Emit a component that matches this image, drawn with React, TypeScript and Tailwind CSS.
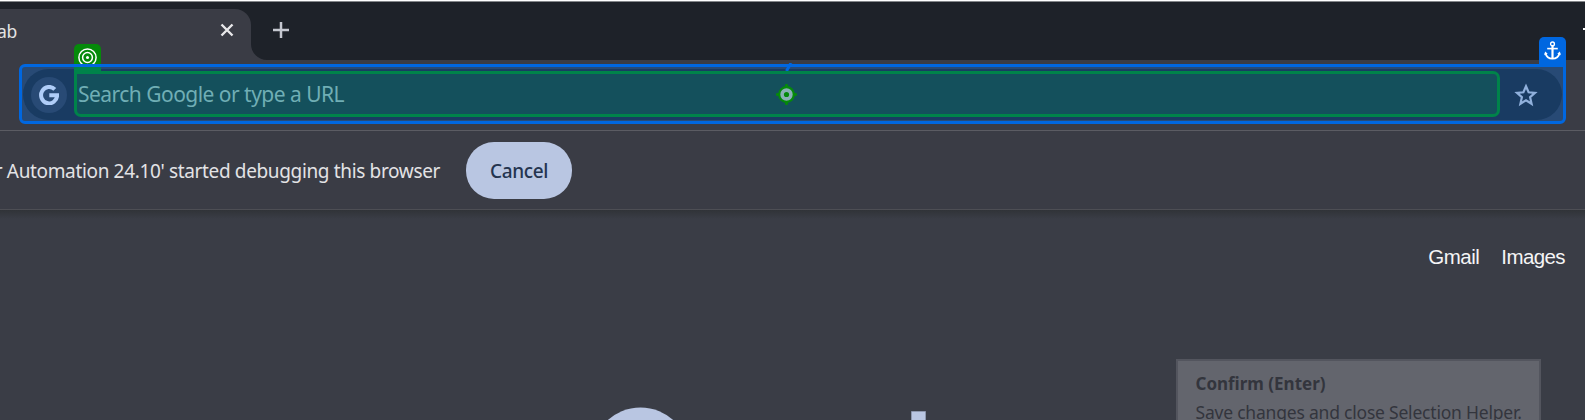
import React from "react";

function TabStrip() {
  return (
    <div className="flex h-[60px] items-end border-t border-white bg-[#1e2229] shadow-[inset_0_1px_0_#84878a]">
      <div className="flex h-[51px] w-[251px] items-center rounded-tr-[16px] bg-[#3a3c45]">
        <span className="ml-[-3px] mt-[-7px] w-[222px] text-[17.5px] tracking-[-0.4px] text-[#e3e3e3]">ab</span>
        <svg className="mt-[-9px] h-4 w-4" viewBox="0 0 16 16" fill="none" stroke="#e8e8ea" strokeWidth="2.4">
          <path d="M2.5 2.5 13.5 13.5M13.5 2.5 2.5 13.5" />
        </svg>
      </div>
      <svg className="h-4 w-4" viewBox="0 0 16 16" fill="#3a3c45">
        <path d="M0 0A16 16 0 0 0 16 16H0Z" />
      </svg>
      <svg className="mb-[22px] ml-[6px] h-4 w-4" viewBox="0 0 16 16" fill="none" stroke="#c5c8d0" strokeWidth="2.5">
        <path d="M8 0V16M0 8H16" />
      </svg>
      <div className="mb-[30px] ml-auto h-[2px] w-[2px] bg-white" />
    </div>
  );
}

function TargetBadge() {
  return (
    <div className="absolute top-[-23px] left-[52px] flex h-[20px] w-[27px] justify-center overflow-hidden rounded-t-[5px] bg-[#058a0a]">
      <svg className="mt-[4px] h-[19px] w-[19px] shrink-0" viewBox="0 0 19 19" fill="none" stroke="#fff" strokeWidth="1.5">
        <circle cx="9.5" cy="9.5" r="8.6" />
        <circle cx="9.5" cy="9.5" r="4.9" />
        <circle cx="9.5" cy="9.5" r="1.5" fill="#fff" stroke="none" />
      </svg>
    </div>
  );
}

function AnchorBadge() {
  return (
    <div className="absolute top-[-30px] right-[-3px] flex h-[30px] w-[27px] justify-center rounded-t-[5px] bg-[#0067e0]">
      <svg className="mt-[4px] h-[19px] w-[17px]" viewBox="0 0 17 19" fill="none" stroke="#fff">
        <circle cx="8.5" cy="2.9" r="1.9" strokeWidth="1.4" />
        <path d="M8.5 5V17.5" strokeWidth="2.2" />
        <path d="M3.2 7.6H13.8" strokeWidth="1.6" />
        <path d="M1.4 12C2.2 15.4 5 17.6 8.5 17.7C12 17.6 14.8 15.4 15.6 12" strokeWidth="1.8" />
        <path d="M.2 14.2 1.1 10.5 3.7 12.7ZM16.8 14.2 15.9 10.5 13.3 12.7Z" fill="#fff" stroke="none" />
      </svg>
    </div>
  );
}

function AddressBar() {
  return (
    <div className="h-[70px] bg-[#3a3c45] pt-[4px] pr-[19px] pl-[19px]">
      <div className="relative h-[60px] rounded-[6px] rounded-tr-none border-[3px] border-[#0067e0] bg-[#284a75] pt-[2px] pr-px pl-px">
        <div className="flex h-[51px] items-center rounded-full bg-[#193b62]">
          <div className="ml-2 flex h-9 w-9 items-center justify-center rounded-full bg-[#284a75]">
            <svg className="h-5 w-5" viewBox="0 0 20 20" fill="none" stroke="#b0cdf8" strokeWidth="4">
              <path d="M15.8 4.4A8 8.2 0 1 0 18.1 10.3H10.3" />
            </svg>
          </div>
          <div className="mt-[-1px] ml-[7px] flex h-[46px] w-[1426px] items-center rounded-[7px] rounded-tl-none border-[3px] border-[#00834a] bg-[#14505c] pt-[2px] pl-px">
            <span className="whitespace-nowrap text-[21px] tracking-[-0.53px] text-[#70aeb5]">Search Google or type a URL</span>
          </div>
          <svg className="ml-[14px] h-6 w-6" viewBox="0 0 24 24" fill="none" stroke="#90b0dc" strokeWidth="2.2">
            <path d="M12 3.2 14.6 9.3 21 9.9 16.1 14.2 17.6 20.8 12 17.3 6.4 20.8 7.9 14.2 3 9.9 9.4 9.3Z" />
          </svg>
        </div>
        <div className="absolute top-0 left-[52px] h-[5px] w-[27px] bg-[#00834a]" />
        <TargetBadge />
        <AnchorBadge />
        <svg className="absolute top-[-4px] left-[763px] h-[8px] w-[8px]" viewBox="0 0 8 8" stroke="#0067e0" strokeWidth="3">
          <path d="M1.5 8 6 0" />
        </svg>
        <svg className="absolute top-[17px] left-[754px] h-[21px] w-[21px]" viewBox="0 0 21 21">
          <path d="M9.4 0H11.6L12.6 4H8.4ZM9.4 21H11.6L12.6 17H8.4ZM0 9.4V11.6L4 12.6V8.4ZM21 9.4V11.6L17 12.6V8.4Z" fill="#058a0a" />
          <circle cx="10.5" cy="10.5" r="8.4" fill="#058a0a" />
          <circle cx="10.5" cy="10.5" r="4.4" fill="none" stroke="#8ab0b5" strokeWidth="3.6" />
        </svg>
      </div>
    </div>
  );
}

function InfoBar() {
  return (
    <div className="flex h-[80px] items-center border-y border-t-[#5b5c63] border-b-[#4d4e54] bg-[#3a3c45]">
      <div className="flex w-[440px] shrink-0 justify-end pt-[2px]">
        <span className="whitespace-nowrap text-[19px] tracking-[-0.35px] text-[#e3e3e5]">r Automation 24.10' started debugging this browser</span>
      </div>
      <button className="ml-[26px] h-[57px] w-[106px] rounded-[28px] bg-[#b9c6e2] pt-[2px] text-[19px] font-medium tracking-[-0.4px] text-[#24344f]">Cancel</button>
    </div>
  );
}

function NewTabPage() {
  return (
    <div className="flex h-[210px] flex-col overflow-hidden bg-[linear-gradient(to_bottom,#303338_0px,#3a3d46_9px)]">
      <div className="flex justify-end gap-[22px] pt-[35px] pr-5 font-['Liberation_Sans',sans-serif] text-[20.5px] leading-[24px] text-[#f5f5f6]">
        <span className="tracking-[-0.5px]">Gmail</span>
        <span className="tracking-[-0.6px]">Images</span>
      </div>
      <div className="flex items-start pt-[90px]">
        <svg className="ml-[590px] mt-[47px] h-[15px] w-[340px] shrink-0" viewBox="0 0 340 15" fill="#b9c6e2">
          <circle cx="50.5" cy="50.5" r="49" />
          <path d="M321.5 5.5H335.5V15H321.5Z" stroke="#8d97ae" />
        </svg>
        <div className="ml-[246px] h-[90px] w-[365px] shrink-0 border-2 border-[#53555e] bg-[#63656d] pt-[9px] pl-[17.5px] text-[#33353d]">
          <p className="whitespace-nowrap text-[17px] leading-[28px] font-bold">Confirm (Enter)</p>
          <p className="whitespace-nowrap text-[17.5px] leading-[29px] tracking-[-0.21px]">Save changes and close Selection Helper.</p>
        </div>
      </div>
    </div>
  );
}

export default function App() {
  return (
    <main className="h-[420px] w-[1585px] overflow-hidden font-['Noto_Sans',sans-serif]">
      <TabStrip />
      <AddressBar />
      <InfoBar />
      <NewTabPage />
    </main>
  );
}
